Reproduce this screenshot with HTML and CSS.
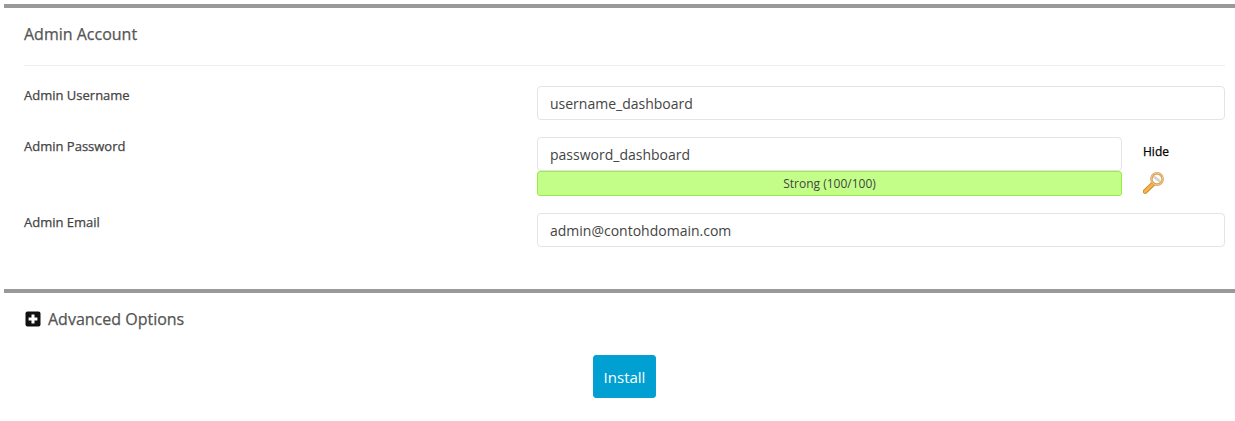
FILE: index.html
```html
<!DOCTYPE html>
<html lang="en">
<head>
<meta charset="utf-8">
<title>Admin Account</title>
<link rel="stylesheet" href="styles.css">
</head>
<body>
<section class="panel panel-account">
  <h2 class="panel-title">Admin Account</h2>
  <div class="rows">
    <div class="row">
      <label class="row-label">Admin Username</label>
      <div class="field"><input class="text-input" type="text" value="username_dashboard"></div>
    </div>
    <div class="row">
      <label class="row-label">Admin Password</label>
      <div class="field field-password">
        <div class="password-main">
          <input class="text-input" type="text" value="password_dashboard">
          <div class="strength">Strong (100/100)</div>
        </div>
        <div class="password-tools">
          <a class="hide-link">Hide</a>
          <svg class="key-icon" viewBox="0 0 22 24" width="22" height="24" aria-hidden="true">
            <path d="M10.5 12.5 2.2 20.4" stroke="#c98a2e" stroke-width="4.8" stroke-linecap="round" fill="none"/>
            <path d="M10.5 12.5 2.2 20.4" stroke="#f7b24a" stroke-width="3" stroke-linecap="round" fill="none"/>
            <circle cx="14" cy="8" r="5.6" fill="#fff" stroke="#dca45a" stroke-width="2.6"/>
            <circle cx="14" cy="8" r="5.9" fill="none" stroke="#f0c58a" stroke-width="1"/>
            <path d="M10.8 5.6 17 10.4" stroke="#d9d2c8" stroke-width="2.6" fill="none"/>
          </svg>
        </div>
      </div>
    </div>
    <div class="row">
      <label class="row-label">Admin Email</label>
      <div class="field"><input class="text-input" type="text" value="admin@contohdomain.com"></div>
    </div>
  </div>
</section>
<section class="panel panel-advanced">
  <div class="advanced-toggle">
    <svg class="plus-icon" viewBox="0 0 16 16" width="16" height="16" aria-hidden="true">
      <rect x="0.5" y="0.5" width="15" height="15" rx="2" fill="#111"/>
      <path d="M8 3.6v8.8M3.6 8h8.8" stroke="#fff" stroke-width="3" fill="none"/>
    </svg>
    <span class="advanced-label">Advanced Options</span>
  </div>
  <div class="actions"><button class="install-btn" type="button">Install</button></div>
</section>
</body>
</html>
```
FILE: styles.css
```css
* { box-sizing: border-box; }
html, body { margin: 0; padding: 0; background: #fff; }
body {
  padding: 4px 0 0 4px;
  font-family: "Open Sans", "Liberation Sans", sans-serif;
  color: #444;
  overflow: hidden;
}
.panel { border-top: 4px solid #999; }
.panel-account { height: 285px; padding: 0 10px 0 20px; }
.panel-title {
  margin: 0;
  height: 58px;
  padding-top: 16px;
  font-size: 16px;
  line-height: 20px;
  font-weight: 500;
  color: #555;
  border-bottom: 1px solid #eee;
  -webkit-text-stroke: 0.25px #555;
}
.rows { padding-top: 20px; display: flex; flex-direction: column; gap: 17px; }
.row { display: grid; grid-template-columns: 513px 1fr; }
.row-label {
  font-size: 13px;
  line-height: 18px;
  font-weight: 500;
  color: #444;
  -webkit-text-stroke: 0.25px #444;
}
.text-input {
  display: block;
  width: 100%;
  height: 34px;
  padding: 0 12px;
  border: 1px solid #e4e4e4;
  border-radius: 4px;
  background: #fff;
  font-family: inherit;
  font-size: 14px;
  color: #444;
  outline: none;
}
.field-password { display: flex; gap: 21px; }
.password-main { width: 585px; }
.strength {
  height: 25px;
  background: #c3ff88;
  border: 1px solid #98ec48;
  border-radius: 3px;
  font-size: 12px;
  line-height: 23px;
  text-align: center;
  color: #444;
}
.password-tools { display: flex; flex-direction: column; align-items: flex-start; }
.hide-link {
  margin-top: 6px;
  font-size: 12px;
  line-height: 17px;
  font-weight: 500;
  color: #000;
  -webkit-text-stroke: 0.25px #000;
}
.key-icon { display: block; margin-top: 11px; }
.panel-advanced { padding: 0 0 0 21px; }
.advanced-toggle { display: flex; align-items: center; gap: 7px; height: 22px; margin-top: 15px; }
.plus-icon { display: block; flex: none; }
.advanced-label { font-size: 16px; line-height: 22px; color: #555; font-weight: 500; -webkit-text-stroke: 0.25px #555; }
.actions { display: flex; padding-left: 568px; margin-top: 25px; }
.install-btn {
  width: 63px;
  height: 43px;
  padding: 0;
  border: 1px solid #0a9fd2;
  border-radius: 3px;
  background: #00a0d2;
  color: #fff;
  font-family: inherit;
  font-size: 15px;
}
```
